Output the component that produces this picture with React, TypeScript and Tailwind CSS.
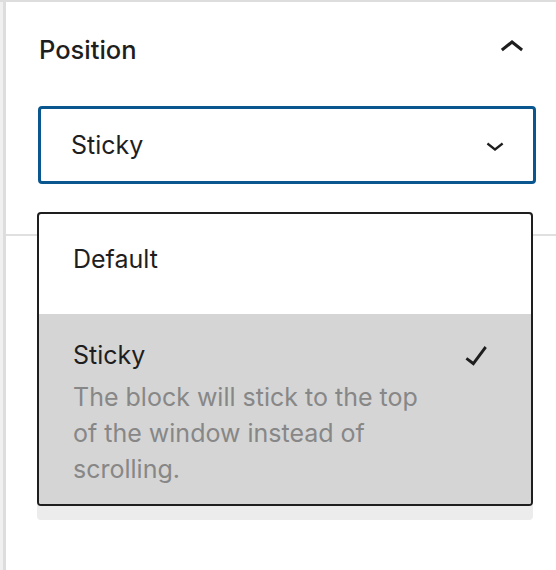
import React from 'react';

const font = { fontFamily: 'Inter, "Noto Sans", sans-serif' };

function ChevronUp() {
  return (
    <svg width="48" height="48" viewBox="0 0 24 24" className="-mt-[11px] shrink-0 fill-[#1e1e1e]">
      <path d="M6.5 12.4L12 8l5.5 4.4-.9 1.2L12 10l-4.6 3.6-1-1.2z" />
    </svg>
  );
}

function ChevronDown() {
  return (
    <svg width="36" height="36" viewBox="0 0 24 24" className="shrink-0 fill-[#1e1e1e]">
      <path d="M17.5 11.6L12 16l-5.5-4.4.9-1.2L12 14l4.6-3.6 1 1.2z" />
    </svg>
  );
}

function Check() {
  return (
    <svg width="44" height="44" viewBox="0 0 24 24" className="shrink-0 fill-[#1e1e1e]">
      <path d="M16.7 7.1l-6.3 8.5-3.2-2.4-.9 1.2 4.4 3.4 7.2-9.6z" />
    </svg>
  );
}

export default function App() {
  return (
    <div className="relative flex h-[570px] w-[556px] border-t-2 border-[#dddddd] bg-white text-[#1e1e1e]" style={font}>
      <div className="w-[3px] bg-[#f0f0f0]" />
      <div className="flex-1 border-l-[3px] border-[#dddddd]">
        <div className="border-b-2 border-[#e0e0e0] pb-[50px] pl-[32px] pr-[20px] pt-[33px]">
          <div className="flex h-[30px] items-start justify-between pl-px">
            <h2 className="text-[25.5px] font-medium leading-[30px]">Position</h2>
            <ChevronUp />
          </div>
          <div className="mt-[41px] flex h-[78px] items-center justify-between rounded-[4px] border-[3px] border-[#0a5790] pl-[30px] pr-[20px]">
            <span className="text-[25px] leading-[30px]">Sticky</span>
            <ChevronDown />
          </div>
        </div>
      </div>

      <div className="absolute left-[37px] top-[210px] w-[496px] rounded-[4px] bg-[#ececec] pb-[14px]">
        <div className="overflow-hidden rounded-[4px] border-2 border-[#1e1e1e] bg-white">
          <div className="h-[100px] pl-[34px] pt-[30px] text-[25px] leading-[30px]">Default</div>
          <div className="h-[190px] bg-[#d5d5d5] pl-[34px] pr-[33px] pt-[26px]">
            <div className="flex h-[30px] items-center justify-between">
              <span className="text-[25px] leading-[30px]">Sticky</span>
              <Check />
            </div>
            <p className="mt-[9px] max-w-[370px] text-[25px] leading-[36px] text-[#878787]">
              The block will stick to the top of the window instead of scrolling.
            </p>
          </div>
        </div>
      </div>
    </div>
  );
}
